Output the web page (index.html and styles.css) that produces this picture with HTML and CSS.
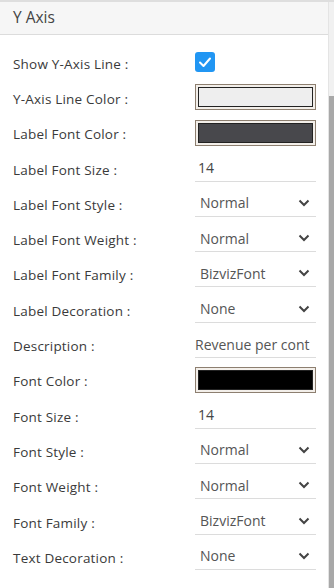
FILE: index.html
```html
<!DOCTYPE html>
<html>
<head>
    <title>Y Axis</title>
    <meta name="viewport" content="width=device-width, initial-scale=1.0">
    <link rel="stylesheet" href="styles.css">
</head>
<body>
    <div class="wrap">
        <div class="panel">
            <div class="panel-head">Y Axis</div>
            <div class="panel-body">
                <div class="row">
                    <label>Show Y-Axis Line :</label>
                    <span class="check">
                        <svg width="14" height="12" viewBox="0 0 14 12"><path d="M2 6.5 L5.5 10 L12 2.5" fill="none" stroke="#fff" stroke-width="2" stroke-linecap="round" stroke-linejoin="round"/></svg>
                    </span>
                </div>
                <div class="row">
                    <label>Y-Axis Line Color :</label>
                    <span class="color"><span class="swatch swatch-light"></span></span>
                </div>
                <div class="row">
                    <label>Label Font Color :</label>
                    <span class="color"><span class="swatch swatch-dark"></span></span>
                </div>
                <div class="row">
                    <label>Label Font Size :</label>
                    <span class="field">14</span>
                </div>
                <div class="row">
                    <label>Label Font Style :</label>
                    <span class="select">Normal<svg class="chev" width="12" height="8" viewBox="0 0 12 8"><path d="M1.5 1.5 L6 6 L10.5 1.5" fill="none" stroke="#444" stroke-width="2"/></svg></span>
                </div>
                <div class="row">
                    <label>Label Font Weight :</label>
                    <span class="select">Normal<svg class="chev" width="12" height="8" viewBox="0 0 12 8"><path d="M1.5 1.5 L6 6 L10.5 1.5" fill="none" stroke="#444" stroke-width="2"/></svg></span>
                </div>
                <div class="row">
                    <label>Label Font Family :</label>
                    <span class="select">BizvizFont<svg class="chev" width="12" height="8" viewBox="0 0 12 8"><path d="M1.5 1.5 L6 6 L10.5 1.5" fill="none" stroke="#444" stroke-width="2"/></svg></span>
                </div>
                <div class="row">
                    <label>Label Decoration :</label>
                    <span class="select">None<svg class="chev" width="12" height="8" viewBox="0 0 12 8"><path d="M1.5 1.5 L6 6 L10.5 1.5" fill="none" stroke="#444" stroke-width="2"/></svg></span>
                </div>
                <div class="row">
                    <label>Description :</label>
                    <span class="field field-desc">Revenue per cont</span>
                </div>
                <div class="row">
                    <label>Font Color :</label>
                    <span class="color"><span class="swatch swatch-black"></span></span>
                </div>
                <div class="row">
                    <label>Font Size :</label>
                    <span class="field">14</span>
                </div>
                <div class="row">
                    <label>Font Style :</label>
                    <span class="select">Normal<svg class="chev" width="12" height="8" viewBox="0 0 12 8"><path d="M1.5 1.5 L6 6 L10.5 1.5" fill="none" stroke="#444" stroke-width="2"/></svg></span>
                </div>
                <div class="row">
                    <label>Font Weight :</label>
                    <span class="select">Normal<svg class="chev" width="12" height="8" viewBox="0 0 12 8"><path d="M1.5 1.5 L6 6 L10.5 1.5" fill="none" stroke="#444" stroke-width="2"/></svg></span>
                </div>
                <div class="row">
                    <label>Font Family :</label>
                    <span class="select">BizvizFont<svg class="chev" width="12" height="8" viewBox="0 0 12 8"><path d="M1.5 1.5 L6 6 L10.5 1.5" fill="none" stroke="#444" stroke-width="2"/></svg></span>
                </div>
                <div class="row">
                    <label>Text Decoration :</label>
                    <span class="select">None<svg class="chev" width="12" height="8" viewBox="0 0 12 8"><path d="M1.5 1.5 L6 6 L10.5 1.5" fill="none" stroke="#444" stroke-width="2"/></svg></span>
                </div>
            </div>
        </div>
        <div class="scroll">
            <div class="thumb"></div>
        </div>
    </div>
</body>
</html>
```

FILE: styles.css
```css
body {
    margin: 0;
    font-family: "Open Sans", "Noto Sans", sans-serif;
    background-color: #fff;
    overflow: hidden;
}

.wrap {
    display: flex;
    height: 588px;
    border-top: 2px solid #dedede;
    box-sizing: border-box;
}

.panel {
    flex: 1;
    overflow: hidden;
}

.panel-head {
    height: 32px;
    line-height: 31px;
    padding-left: 13px;
    background-color: #f6f6f6;
    border-bottom: 1px solid #dcdcdc;
    color: #444;
    font-size: 15.5px;
}

.panel-body {
    padding-top: 11px;
}

.row {
    display: grid;
    grid-template-columns: 182px 121px;
    align-items: center;
    height: 35.3px;
    padding-left: 13px;
}

label {
    font-size: 13.5px;
    color: #3a3a3a;
    letter-spacing: 0.2px;
}

.check {
    width: 20px;
    height: 20px;
    border-radius: 3px;
    background-color: #2196f3;
    display: flex;
    align-items: center;
    justify-content: center;
    margin-top: -3px;
}

.color {
    display: block;
    height: 26px;
    box-sizing: border-box;
    border: 1px solid #8d7f70;
    background-color: #f3efea;
    padding: 2px;
    margin-top: -3px;
}

.swatch {
    display: block;
    height: 100%;
    box-sizing: border-box;
    border: 1px solid #222;
}

.swatch-light {
    background-color: #eeeeee;
}

.swatch-dark {
    background-color: #48484c;
}

.swatch-black {
    background-color: #000;
}

.field,
.select {
    display: flex;
    align-items: center;
    height: 27px;
    box-sizing: border-box;
    border-bottom: 1px solid #dcdcdc;
    font-size: 14px;
    color: #444;
    white-space: nowrap;
    overflow: hidden;
    margin-top: -3px;
}

.field {
    padding-left: 3px;
}

.field-desc {
    padding-left: 0;
    color: #555;
    font-size: 14px;
}

.select {
    padding-left: 5px;
    justify-content: space-between;
    padding-right: 6px;
    color: #555;
}

.chev {
    flex-shrink: 0;
}

.scroll {
    width: 5px;
    background-color: #f1f1f1;
    border-left: 1px solid #e4e4e4;
    display: flex;
    flex-direction: column;
    justify-content: flex-end;
}

.thumb {
    height: 492px;
    background-color: #a8a8a8;
}
```
